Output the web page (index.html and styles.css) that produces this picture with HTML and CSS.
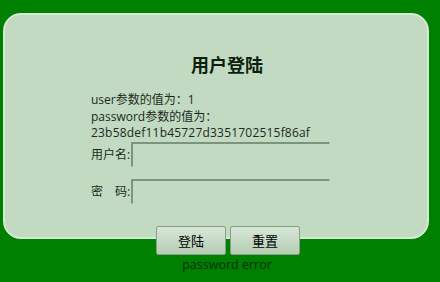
FILE: index.html
```html
<!DOCTYPE html>
<html lang="zh">
<head>
<meta charset="utf-8">
<title>用户登陆</title>
<link rel="stylesheet" href="styles.css">
</head>
<body>
<div class="card">
  <div class="column">
    <h1 class="title">用户登陆</h1>
    <div class="params">
      <div>user参数的值为：1</div>
      <div>password参数的值为：<span class="hash">23b58def11b45727d3351702515f86af</span></div>
    </div>
    <div class="row">
      <label class="label">用户名:</label>
      <input class="field" type="text">
    </div>
    <div class="row row-second">
      <label class="label">密　码:</label>
      <input class="field" type="password">
    </div>
  </div>
</div>
<div class="footer">
  <div class="buttons">
    <button class="btn" type="button">登陆</button>
    <button class="btn" type="button">重置</button>
  </div>
  <div class="error">password error</div>
</div>
</body>
</html>
```
FILE: styles.css
```css
html, body {
  margin: 0;
  padding: 0;
}
body {
  background: #008000;
  font-family: "Open Sans", "Noto Sans CJK SC", sans-serif;
  font-size: 12px;
  color: #1c2a1c;
}
.card {
  margin: 13px 0 0 3px;
  width: 426px;
  height: 226px;
  box-sizing: border-box;
  background: #c1dac1;
  border: 2px solid #d3ead3;
  border-radius: 18px;
  padding-left: 86px;
}
.column {
  width: 272px;
  padding-top: 37px;
}
.title {
  margin: 0;
  text-align: center;
  font-size: 18px;
  line-height: 24px;
  font-weight: bold;
  color: #0e1e0e;
  font-family: "Noto Sans CJK SC", sans-serif;
}
.params {
  margin-top: 16px;
  line-height: 16.5px;
}
.hash {
  letter-spacing: 0.2px;
}
.row {
  display: flex;
  align-items: center;
  height: 25px;
}
.row-second {
  margin-top: 12px;
}
.label {
  width: 40px;
  color: #1c2a1c;
}
.field {
  width: 199px;
  height: 25px;
  box-sizing: border-box;
  margin: 0;
  padding: 0;
  background: transparent;
  border-style: solid;
  border-width: 2px 1px 1px 2px;
  border-color: #7c947c #c1dac1 #c1dac1 #7c947c;
  outline: none;
}
.footer {
  margin: -13px 0 0 91px;
  width: 272px;
}
.buttons {
  display: flex;
  justify-content: center;
  gap: 4px;
  padding-left: 2px;
}
.btn {
  width: 70px;
  height: 29px;
  margin: 0;
  padding: 0;
  border: 1px solid #8a9e8a;
  border-radius: 2px;
  background: linear-gradient(#d6e7d6, #b5cdb5);
  font-family: "Noto Sans CJK SC", sans-serif;
  font-size: 13px;
  color: #000;
}
.error {
  margin-top: 1px;
  text-align: center;
  font-size: 12.5px;
  line-height: 17px;
  color: #062c06;
}
```
